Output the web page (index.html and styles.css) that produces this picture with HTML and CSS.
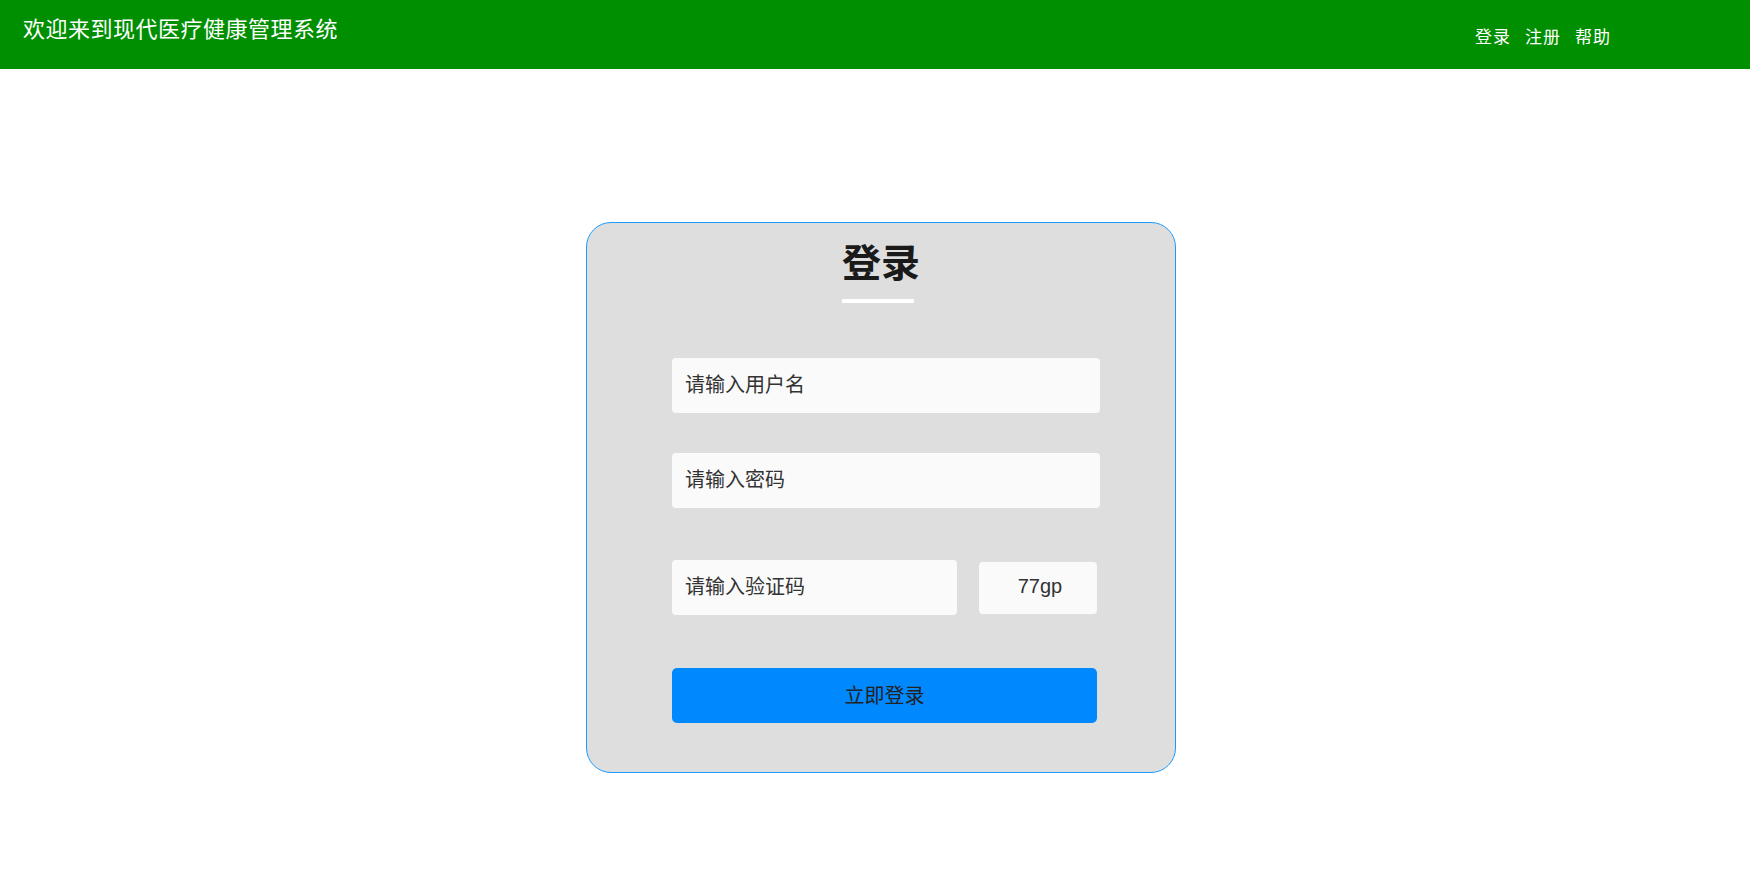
FILE: index.html
```html
<!DOCTYPE html>
<html lang="zh-CN">
<head>
<meta charset="utf-8">
<title>现代医疗健康管理系统</title>
<link rel="stylesheet" href="styles.css">
</head>
<body>
<header class="topbar">
  <div class="brand">欢迎来到现代医疗健康管理系统</div>
  <nav class="nav">
    <a class="nav-link" href="#">登录</a>
    <a class="nav-link" href="#">注册</a>
    <a class="nav-link" href="#">帮助</a>
  </nav>
</header>
<main class="page">
  <section class="card">
    <h1 class="card-title">登录</h1>
    <div class="title-bar"></div>
    <form class="form">
      <input class="field" type="text" placeholder="请输入用户名">
      <input class="field field-pwd" type="password" placeholder="请输入密码">
      <div class="captcha-row">
        <input class="field field-code" type="text" placeholder="请输入验证码">
        <div class="captcha">77gp</div>
      </div>
      <button class="submit" type="button">立即登录</button>
    </form>
  </section>
</main>
</body>
</html>
```
FILE: styles.css
```css
* { box-sizing: border-box; }
html, body {
  margin: 0;
  padding: 0;
  background: #ffffff;
  font-family: "Liberation Sans", "Noto Sans CJK SC", sans-serif;
}
.topbar {
  height: 69px;
  background: #008f00;
  display: flex;
  justify-content: space-between;
  align-items: flex-start;
  color: #ffffff;
}
.brand {
  font-family: "Noto Sans CJK SC", sans-serif;
  font-size: 22px;
  letter-spacing: 0.5px;
  line-height: 22px;
  margin: 16px 0 0 23px;
}
.nav {
  display: flex;
  gap: 14px;
  margin: 27px 139px 0 0;
}
.nav-link {
  font-family: "Noto Sans CJK SC", sans-serif;
  color: #ffffff;
  text-decoration: none;
  font-size: 17px;
  letter-spacing: 1px;
  line-height: 17px;
}
.page {
  padding-top: 153px;
}
.card {
  width: 590px;
  height: 551px;
  margin-left: calc(50% - 289px);
  background: #dedede;
  border: 1px solid #1a9cff;
  border-radius: 25px;
  padding: 17px 0 0 85px;
}
.card-title {
  margin: 0;
  font-family: "Noto Sans CJK SC", sans-serif;
  font-weight: 700;
  font-size: 39px;
  line-height: 40px;
  color: #1a1a1a;
  text-align: center;
  padding-right: 85px;
}
.title-bar {
  width: 72px;
  height: 4px;
  background: #ffffff;
  margin: 19px 0 0 170px;
}
.form {
  display: flex;
  flex-direction: column;
  margin-top: 55px;
  width: 428px;
}
.field {
  display: block;
  height: 55px;
  width: 428px;
  border: none;
  outline: none;
  border-radius: 4px;
  background: #fafafa;
  padding: 0 13px 4px;
  font-family: "Noto Sans CJK SC", sans-serif;
  font-size: 20px;
  color: #333333;
}
.field::placeholder {
  color: #333333;
  opacity: 1;
}
.field-pwd { margin-top: 40px; }
.captcha-row {
  display: flex;
  align-items: center;
  gap: 22px;
  margin-top: 52px;
}
.field-code { width: 285px; }
.captcha {
  width: 118px;
  height: 52px;
  background: #fafafa;
  border-radius: 4px;
  display: flex;
  align-items: center;
  justify-content: center;
  padding: 0 0 2px 4px;
  font-size: 20px;
  color: #333333;
}
.submit {
  margin-top: 53px;
  width: 425px;
  height: 55px;
  border: none;
  border-radius: 5px;
  background: #0088ff;
  color: #222222;
  padding: 0 0 2px;
  font-family: "Noto Sans CJK SC", sans-serif;
  font-size: 20px;
  cursor: pointer;
}
```
